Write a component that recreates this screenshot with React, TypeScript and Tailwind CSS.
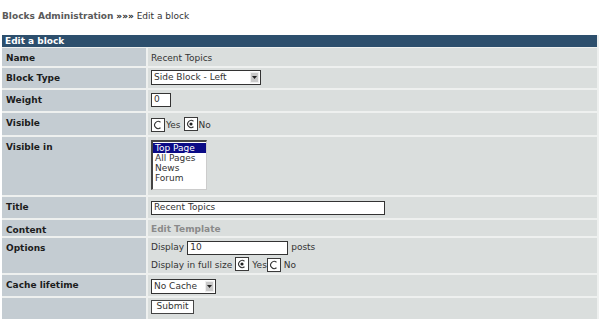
import React from "react";

const Radio = ({ checked }: { checked?: boolean }) => (
  <span className="inline-flex w-[14px] h-[14px] border border-[#3a3a3a] bg-white items-center justify-center shrink-0">
    <svg width="10" height="10" viewBox="0 0 10 10">
      <path d="M7.5 2.2 A3.6 3.6 0 1 0 7.5 7.8" fill="none" stroke="#333" strokeWidth="1.1" />
      {checked && <circle cx="5" cy="5" r="1.6" fill="#222" />}
    </svg>
  </span>
);

const Select = ({ label, w }: { label: string; w: string }) => (
  <span className={`inline-flex h-[15px] border border-[#333] bg-white items-center justify-between ${w}`}>
    <span className="pl-[2px] leading-none">{label}</span>
    <span className="w-[9px] h-[11px] mr-[1px] bg-[#c9c9c9] border border-[#eee] flex items-center justify-center">
      <svg width="5" height="3" viewBox="0 0 5 3"><path d="M0 0h5L2.5 3z" fill="#222" /></svg>
    </span>
  </span>
);

const Row = ({ label, h, children, pt = "pt-[3px]" }: { label: string; h: string; children?: React.ReactNode; pt?: string }) => (
  <div className={`flex gap-[2px] ${h}`}>
    <div className="w-[144px] bg-[#c4ccd2] pl-[4px] pt-[4px] font-bold text-[#1c1c1c]">{label}</div>
    <div className={`flex-1 bg-[#dadedd] pl-[3px] ${pt}`}>{children}</div>
  </div>
);

export default function App() {
  return (
    <div
      className="w-[600px] h-[319px] bg-white overflow-hidden text-[9px] text-[#333]"
      style={{ fontFamily: '"DejaVu Sans", Verdana, sans-serif' }}
    >
      <div className="h-[35px] pl-[2px] pt-[11px] leading-[11px]">
        <span className="font-bold text-[#5a5a5a]">Blocks Administration</span>{" "}
        <span className="font-bold text-[#222]">»»»</span>{" "}
        <span className="text-[#333]">Edit a block</span>
      </div>
      <div className="ml-[2px] w-[597px] border-r-[2px] border-[#eef0ef] bg-[#eef0ef] flex flex-col gap-[2px]">
        <div className="h-[12px] bg-[#2d4f6d] text-white font-bold pl-[3px] leading-[12px] mb-[-1px]">Edit a block</div>
        <Row label="Name" h="h-[18px]" pt="pt-[4px]">Recent Topics</Row>
        <Row label="Block Type" h="h-[20px]" pt="pt-[2px]">
          <Select label="Side Block - Left" w="w-[110px]" />
        </Row>
        <Row label="Weight" h="h-[21px]" pt="pt-[3px]">
          <span className="inline-flex w-[20px] h-[14px] border border-[#333] bg-white items-center pl-[2px]">0</span>
        </Row>
        <Row label="Visible" h="h-[22px]" pt="pt-[4px]">
          <div className="flex items-center">
            <Radio />
            <span className="ml-[1px]">Yes</span>
            <span className="ml-[3px]"><Radio checked /></span>
            <span className="ml-[1px]">No</span>
          </div>
        </Row>
        <Row label="Visible in" h="h-[58px]" pt="pt-[3px]">
          <div className="w-[56px] h-[50px] bg-white border-l-2 border-t-2 border-[#444] border-r border-b border-r-[#ccc] border-b-[#ccc] leading-[10px] pt-[1px]">
            <div className="bg-[#0b0b86] text-white pl-[2px]">Top Page</div>
            <div className="pl-[2px]">All Pages</div>
            <div className="pl-[2px]">News</div>
            <div className="pl-[2px]">Forum</div>
          </div>
        </Row>
        <Row label="Title" h="h-[21px]" pt="pt-[4px]">
          <span className="inline-flex w-[234px] h-[14px] border border-[#333] bg-white items-center pl-[2px]">Recent Topics</span>
        </Row>
        <Row label="Content" h="h-[16px]" pt="pt-[3px]">
          <span className="font-bold text-[#8a8a8a]">Edit Template</span>
        </Row>
        <Row label="Options" h="h-[35px]" pt="pt-[3px]">
          <div className="flex items-center">
            <span>Display</span>
            <span className="inline-flex ml-[3px] w-[101px] h-[14px] border border-[#333] bg-white items-center pl-[2px]">10</span>
            <span className="ml-[3px]">posts</span>
          </div>
          <div className="flex items-center mt-[2px]">
            <span>Display in full size</span>
            <span className="ml-[3px]"><Radio checked /></span>
            <span className="ml-[3px]">Yes</span>
            <Radio />
            <span className="ml-[3px]">No</span>
          </div>
        </Row>
        <Row label="Cache lifetime" h="h-[21px]" pt="pt-[4px]">
          <Select label="No Cache" w="w-[65px]" />
        </Row>
        <Row label="" h="h-[21px]" pt="pt-[2px]">
          <span className="inline-flex w-[43px] h-[14px] border border-[#444] bg-white items-center justify-center">Submit</span>
        </Row>
      </div>
    </div>
  );
}
